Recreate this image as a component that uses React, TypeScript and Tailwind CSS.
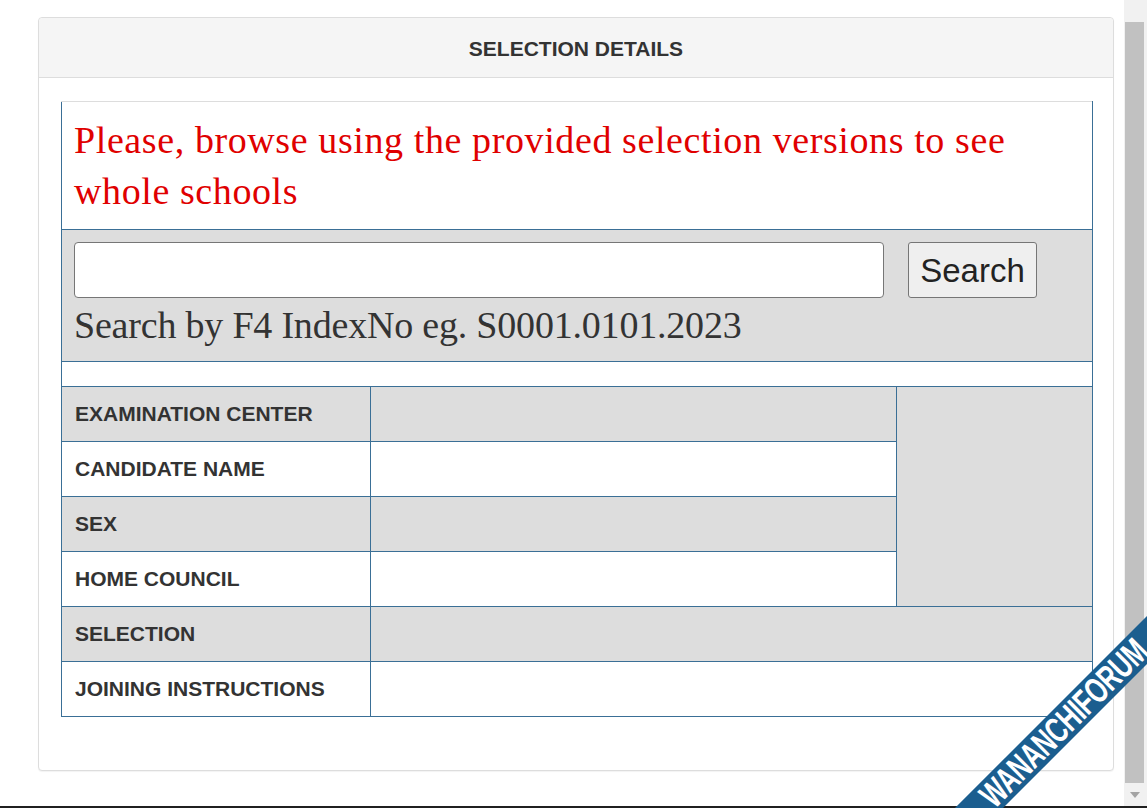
import React from "react";

const rows = [
  { label: "EXAMINATION CENTER", shade: true },
  { label: "CANDIDATE NAME", shade: false },
  { label: "SEX", shade: true },
  { label: "HOME COUNCIL", shade: false },
  { label: "SELECTION", shade: true },
  { label: "JOINING INSTRUCTIONS", shade: false },
];

const edge = "border border-[#3a6f96]";

export default function App() {
  return (
    <div className="relative h-[808px] w-[1147px] overflow-hidden bg-white font-['Liberation_Sans',Arial,sans-serif]">
      <div className="flex h-[806px]">
        <div className="flex-1 pt-[17px]">
          {/* card */}
          <div className="ml-[38px] w-[1076px] rounded-[4px] border border-[#dddddd] bg-white shadow-[0_1px_1px_rgba(0,0,0,0.05)]">
            <div className="flex h-[60px] items-center justify-center rounded-t-[4px] border-b border-[#dddddd] bg-[#f5f5f5] pt-[2px]">
              <h3 className="text-[21px] font-bold text-[#333]">SELECTION DETAILS</h3>
            </div>
            <div className="px-[22px] pb-[53px] pt-[23px]">
              <table className="w-[1031px] table-fixed border-collapse">
                <colgroup>
                  <col className="w-[309px]" />
                  <col className="w-[526px]" />
                  <col className="w-[196px]" />
                </colgroup>
                <tbody>
                  <tr>
                    <td colSpan={3} className={`${edge} border-t-[#dddddd] h-[128px] px-[12px] align-middle`}>
                      <p className="font-['Liberation_Serif','Times_New_Roman',serif] text-[38px] leading-[51px] tracking-[0.6px] text-[#e00000]">
                        Please, browse using the provided selection versions to see whole schools
                      </p>
                    </td>
                  </tr>
                  <tr>
                    <td colSpan={3} className={`${edge} h-[132px] bg-[#dddddd] px-[12px] pt-[12px] align-top`}>
                      <div className="flex items-center gap-[24px]">
                        <input
                          type="text"
                          className="h-[56px] w-[810px] rounded-[4px] border border-[#767676] bg-white px-2 text-[28px] outline-none"
                        />
                        <button className="h-[56px] w-[129px] rounded-[3px] border border-[#767676] bg-[#efefef] text-[33px] leading-none text-[#222]">
                          Search
                        </button>
                      </div>
                      <p className="mt-[4px] font-['Liberation_Serif','Times_New_Roman',serif] text-[38px] leading-[46px] tracking-[-0.2px] text-[#333]">
                        Search by F4 IndexNo eg. S0001.0101.2023
                      </p>
                    </td>
                  </tr>
                  <tr>
                    <td colSpan={3} className={`${edge} h-[25px]`}></td>
                  </tr>
                  {rows.map((r, i) => (
                    <tr key={r.label} className={r.shade ? "bg-[#dddddd]" : "bg-white"}>
                      <td className={`${edge} h-[55px] px-[13px] text-[21px] font-bold text-[#333]`}>{r.label}</td>
                      <td className={edge} colSpan={i >= 4 ? 2 : 1}></td>
                      {i === 0 && <td rowSpan={4} className={`${edge} bg-[#dddddd]`}></td>}
                    </tr>
                  ))}
                </tbody>
              </table>
            </div>
          </div>
        </div>
        {/* scrollbar */}
        <div className="flex w-[23px] flex-col bg-[#f1f1f1]">
          <div className="h-[22px]" />
          <div className="ml-[1px] mr-[3px] flex-1 bg-[#c1c1c1]" />
          <div className="flex h-[23px] items-center justify-center pr-[2px]">
            <svg width="10" height="6" viewBox="0 0 10 6">
              <path d="M0 0h10L5 6z" fill="#a3a3a3" />
            </svg>
          </div>
        </div>
      </div>
      <div className="h-[2px] bg-[#202020]" />

      {/* watermark ribbon */}
      <div className="absolute left-[814px] top-[706px] flex h-[34px] w-[500px] -rotate-45 items-center justify-center bg-[#1b5e8f]">
        <span className="inline-block scale-x-[0.68] font-['Liberation_Sans',Arial,sans-serif] text-[36px] font-bold leading-none tracking-[-0.5px] text-white">
          WANANCHIFORUM
        </span>
      </div>
    </div>
  );
}
